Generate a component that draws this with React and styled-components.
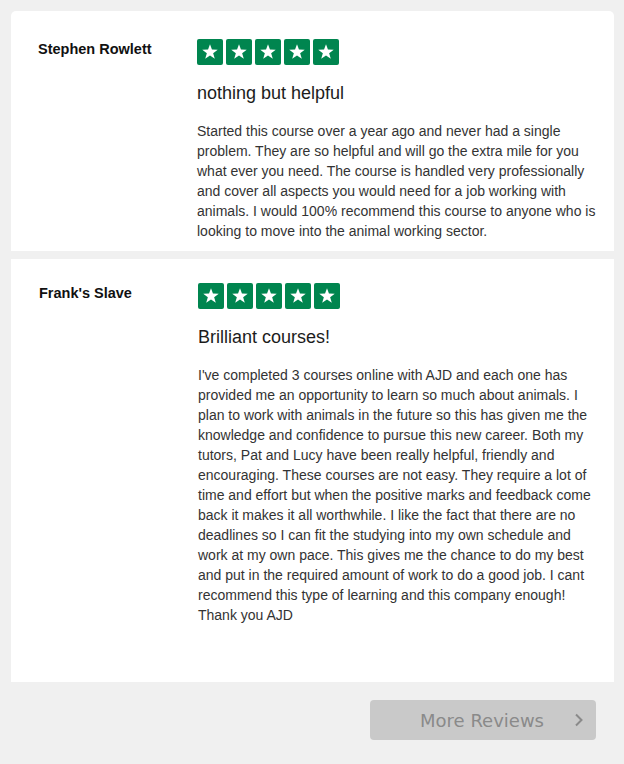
import React from 'react';
import styled, { createGlobalStyle } from 'styled-components';

const Global = createGlobalStyle`
  html, body {
    margin: 0;
    padding: 0;
    background: #f0f0f0;
  }
`;

const Page = styled.div`
  padding: 11px 10px 20px 11px;
  font-family: 'Liberation Sans', Arial, sans-serif;
  display: flex;
  flex-direction: column;
  gap: 8px;
`;

const Card = styled.div`
  background: #fff;
  border-radius: ${({ $rounded }) => ($rounded ? '5px 5px 0 0' : '0')};
  display: flex;
  padding: ${({ $pad }) => $pad};
  min-height: ${({ $minH }) => $minH || 0}px;
  box-sizing: border-box;
`;

const Name = styled.div`
  width: 159px;
  flex: none;
  font-size: 14.5px;
  font-weight: bold;
  color: #111;
  padding-top: 2px;
`;

const Content = styled.div`
  width: 404px;
`;

const Stars = styled.div`
  display: flex;
  gap: 3px;
`;

const StarBox = styled.div`
  width: 26px;
  height: 26px;
  background: #00854f;
  border-radius: 2px;
  display: flex;
  align-items: center;
  justify-content: center;
`;

const Title = styled.h3`
  margin: 17px 0 0;
  font-size: 18px;
  font-weight: normal;
  color: #1c1c1c;
  line-height: 22px;
`;

const Body = styled.p`
  margin: 17px 0 0;
  font-size: 14px;
  line-height: 20px;
  color: #333;
`;

const Footer = styled.div`
  display: flex;
  justify-content: flex-end;
  padding: 10px 18px 0 0;
`;

const MoreButton = styled.button`
  width: 226px;
  height: 40px;
  background: #c9c9c9;
  border: none;
  border-radius: 4px;
  display: flex;
  align-items: center;
  justify-content: flex-end;
  padding: 0 12px 0 0;
  font-family: 'DejaVu Sans', Verdana, sans-serif;
  font-size: 18px;
  color: #8a8a8a;
  gap: 30px;
`;

const Star = () => (
  <StarBox>
    <svg width="18" height="18" viewBox="0 0 24 24">
      <polygon
        fill="#fff"
        points="12,1.5 14.6,8.8 22.3,8.9 16.2,13.6 18.4,21 12,16.6 5.6,21 7.8,13.6 1.7,8.9 9.4,8.8"
      />
    </svg>
  </StarBox>
);

const reviews = [
  {
    name: 'Stephen Rowlett',
    title: 'nothing but helpful',
    body:
      'Started this course over a year ago and never had a single problem. They are so helpful and will go the extra mile for you what ever you need. The course is handled very professionally and cover all aspects you would need for a job working with animals. I would 100% recommend this course to anyone who is looking to move into the animal working sector.',
    pad: '28px 10px 10px 27px',
    rounded: true,
  },
  {
    name: "Frank's Slave",
    title: 'Brilliant courses!',
    body:
      "I've completed 3 courses online with AJD and each one has provided me an opportunity to learn so much about animals. I plan to work with animals in the future so this has given me the knowledge and confidence to pursue this new career. Both my tutors, Pat and Lucy have been really helpful, friendly and encouraging. These courses are not easy. They require a lot of time and effort but when the positive marks and feedback come back it makes it all worthwhile. I like the fact that there are no deadlines so I can fit the studying into my own schedule and work at my own pace. This gives me the chance to do my best and put in the required amount of work to do a good job. I cant recommend this type of learning and this company enough! Thank you AJD",
    pad: '24px 10px 10px 28px',
    minH: 423,
  },
];

export default function App() {
  return (
    <>
      <Global />
      <Page>
        {reviews.map((r) => (
          <Card key={r.name} $pad={r.pad} $rounded={r.rounded} $minH={r.minH}>
            <Name>{r.name}</Name>
            <Content>
              <Stars>
                {[0, 1, 2, 3, 4].map((i) => (
                  <Star key={i} />
                ))}
              </Stars>
              <Title>{r.title}</Title>
              <Body>{r.body}</Body>
            </Content>
          </Card>
        ))}
        <Footer>
          <MoreButton>
            <span>More Reviews</span>
            <svg width="10" height="14" viewBox="0 0 10 14">
              <path d="M2 1.5 L7.5 7 L2 12.5" fill="none" stroke="#8a8a8a" strokeWidth="2" />
            </svg>
          </MoreButton>
        </Footer>
      </Page>
    </>
  );
}
